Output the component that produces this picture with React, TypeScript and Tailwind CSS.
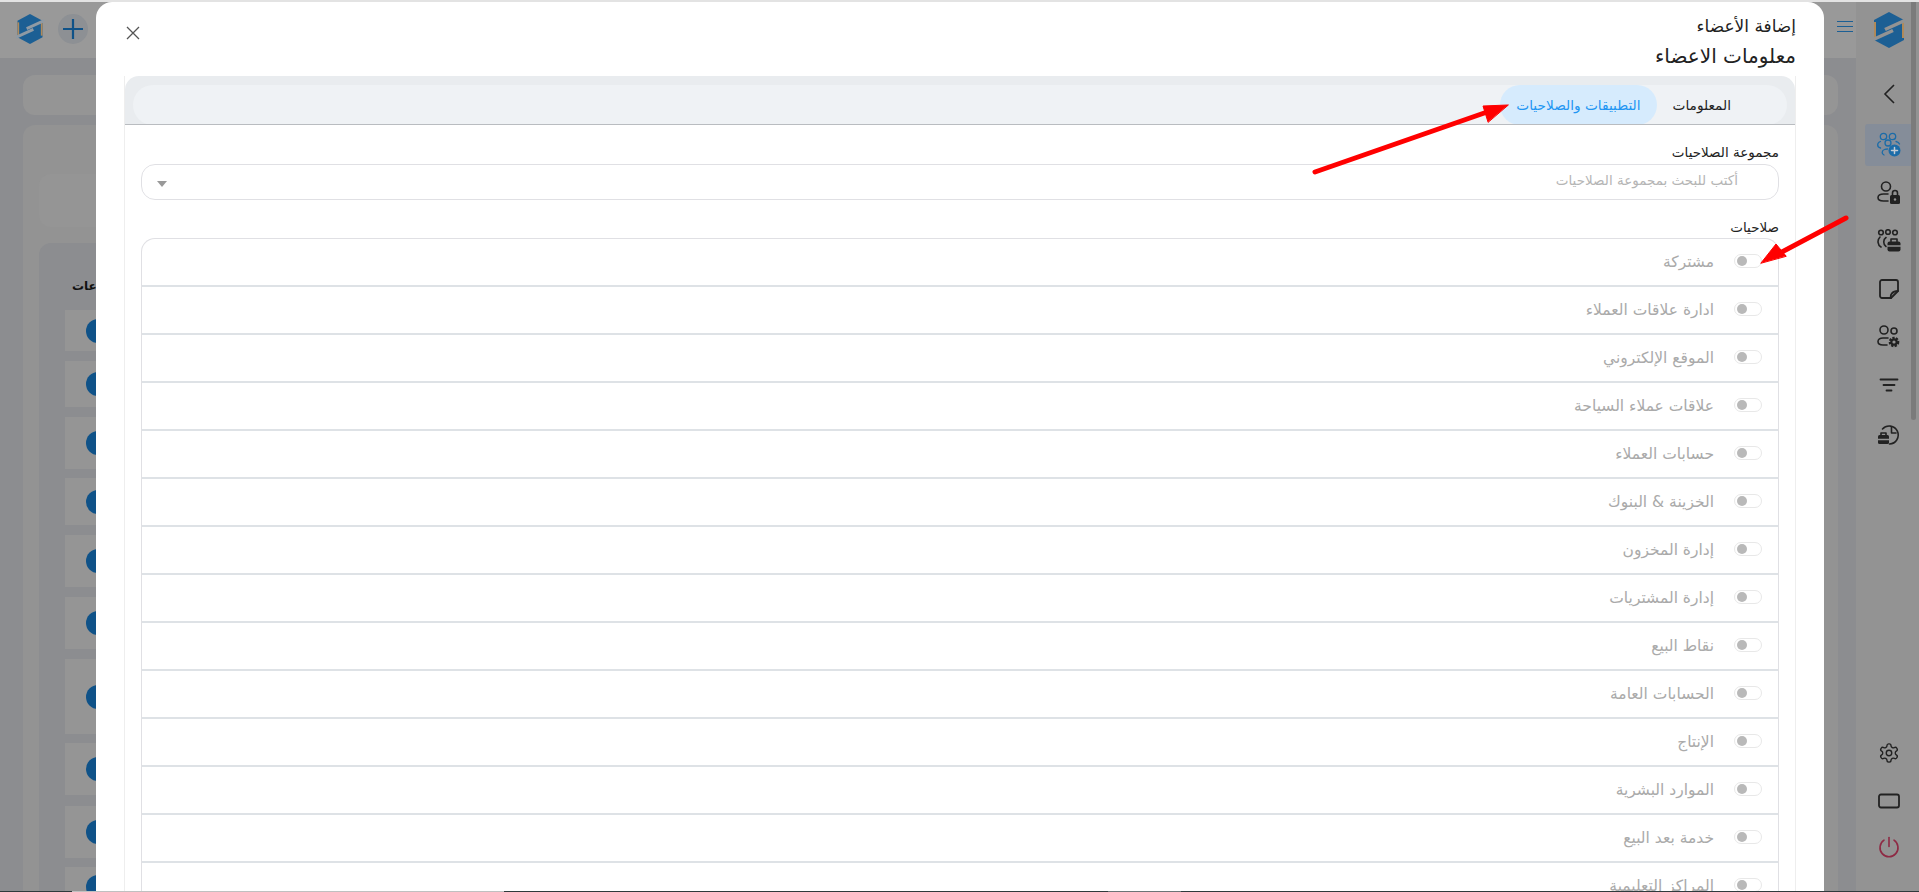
import React from "react";

const perms = [
  "مشتركة",
  "ادارة علاقات العملاء",
  "الموقع الإلكتروني",
  "علاقات عملاء السياحة",
  "حسابات العملاء",
  "الخزينة & البنوك",
  "إدارة المخزون",
  "إدارة المشتريات",
  "نقاط البيع",
  "الحسابات العامة",
  "الإنتاج",
  "الموارد البشرية",
  "خدمة بعد البيع",
  "المراكز التعليمية",
];

const bgRows = [
  [310, 41], [361, 46], [417, 52], [478, 47], [535, 52], [597, 52], [659, 75], [743, 52], [806, 52], [867, 40],
];

function Logo({ width = 32, height = 36, cut = "#939393" }: { width?: number; height?: number; cut?: string }) {
  return (
    <svg width={width} height={height} viewBox="0 0 32 36">
      <path d="M16 0 31 8v20l-15 8-15-8V8z" fill="#1c5f94" />
      <path d="M2 10v16" stroke="#b08a5a" strokeWidth="2" />
      <path d="M30 10v16" stroke="#b08a5a" strokeWidth="2" />
      <path d="M33 8 12 17.500" stroke={cut} strokeWidth="3.500" fill="none" />
      <path d="M-1 28 20 18.500" stroke={cut} strokeWidth="3.500" fill="none" />
    </svg>
  );
}

function SideIcon({ name }: { name: string }) {
  const c = "#222";
  const p = { fill: "none", stroke: c, strokeWidth: 1.6, strokeLinecap: "round" as const, strokeLinejoin: "round" as const };
  if (name === "usersPlus")
    return (
      <svg width="26" height="26" viewBox="0 0 26 26" {...p} stroke="#1c6ca8" strokeWidth="1.300">
        <circle cx="7.500" cy="4.500" r="3.200" />
        <circle cx="16.500" cy="4.500" r="3.200" />
        <circle cx="12" cy="11" r="3" />
        <path d="M4.500 9.500C1 10.500.5 15 4.500 16M8 23c-2.500-1-2.500-4.500.5-5.500 1-.4 2-.5 3-.5" />
        <path d="M20 9.500c1.500.4 3 1.200 3.500 2.500" />
        <circle cx="18.500" cy="18.500" r="6" fill="#1c6ca8" stroke="none" />
        <path d="M18.500 15.500v6M15.500 18.500h6" stroke="#c5ccd4" strokeWidth="1.500" />
      </svg>
    );
  if (name === "userLock")
    return (
      <svg width="24" height="24" viewBox="0 0 24 24" {...p}>
        <circle cx="9" cy="5.500" r="4.500" />
        <path d="M11 13H6.500C3 13 1 14.500 1 16.500S3 20 6.500 20H11" />
        <rect x="13" y="14" width="10" height="9" rx="1.500" fill={c} stroke="none" />
        <path d="M15.500 14v-2a2.500 2.500 0 0 1 5 0v2" />
        <circle cx="18" cy="18.500" r="1.200" fill="#939393" stroke="none" />
      </svg>
    );
  if (name === "team")
    return (
      <svg width="24" height="24" viewBox="0 0 24 24" {...p}>
        <circle cx="4" cy="3.500" r="2.300" />
        <circle cx="11" cy="3" r="2.300" />
        <circle cx="18" cy="3.500" r="2.300" />
        <path d="M3 8C0 11 .5 16 4 18M9 8.500c-3 2-3 7 0 9" />
        <rect x="10.500" y="12.500" width="13" height="10" rx="2" fill={c} stroke="none" />
        <path d="M14 12.500v-2.500h6v2.500" />
        <path d="M10.500 17h13" stroke="#939393" />
      </svg>
    );
  if (name === "note")
    return (
      <svg width="20" height="20" viewBox="0 0 20 20" {...p} strokeWidth="1.800">
        <path d="M12 19H3a2 2 0 0 1-2-2V3a2 2 0 0 1 2-2h14a2 2 0 0 1 2 2v9z" />
        <path d="M12 19c-1-3 1-7 7-7" />
      </svg>
    );
  if (name === "userGear")
    return (
      <svg width="24" height="24" viewBox="0 0 24 24" {...p}>
        <circle cx="7" cy="5" r="4" />
        <circle cx="17" cy="6" r="3" />
        <path d="M11 13H6C3 13 1 14.500 1 16.500S3 20 6 20h4" />
        <circle cx="17" cy="17" r="3.800" fill={c} stroke={c} strokeDasharray="2 1.200" strokeWidth="3" strokeLinecap="butt" />
        <circle cx="17" cy="17" r="1.600" fill="#939393" stroke="none" />
      </svg>
    );
  if (name === "filter")
    return (
      <svg width="20" height="14" viewBox="0 0 20 14" {...p} strokeWidth="1.800">
        <path d="M1.500 1.500h17M4.500 7h11M7.500 12.500h5" />
      </svg>
    );
  if (name === "caseClock")
    return (
      <svg width="24" height="24" viewBox="0 0 24 24" {...p}>
        <path d="M5.500 8a9 9 0 1 1 7 15" />
        <path d="M14.500 6v6h4.500" />
        <rect x="1" y="14" width="11" height="9" rx="1.500" fill={c} stroke="none" />
        <path d="M4 14v-2h5v2" />
        <path d="M1 18.500h11" stroke="#939393" />
      </svg>
    );
  if (name === "gear")
    return (
      <svg width="22" height="22" viewBox="0 0 24 24" {...p} strokeWidth="1.500">
        <path d="M12.220 2h-.44a2 2 0 0 0-2 2v.18a2 2 0 0 1-1 1.730l-.43.250a2 2 0 0 1-2 0l-.15-.080a2 2 0 0 0-2.730.730l-.220.380a2 2 0 0 0 .730 2.730l.150.100a2 2 0 0 1 1 1.720v.510a2 2 0 0 1-1 1.740l-.150.090a2 2 0 0 0-.730 2.730l.220.380a2 2 0 0 0 2.730.730l.150-.080a2 2 0 0 1 2 0l.430.250a2 2 0 0 1 1 1.730V20a2 2 0 0 0 2 2h.440a2 2 0 0 0 2-2v-.18a2 2 0 0 1 1-1.730l.430-.250a2 2 0 0 1 2 0l.150.080a2 2 0 0 0 2.730-.730l.220-.390a2 2 0 0 0-.730-2.730l-.150-.080a2 2 0 0 1-1-1.740v-.500a2 2 0 0 1 1-1.740l.150-.090a2 2 0 0 0 .730-2.730l-.220-.380a2 2 0 0 0-2.730-.730l-.150.080a2 2 0 0 1-2 0l-.430-.250a2 2 0 0 1-1-1.730V4a2 2 0 0 0-2-2z" />
        <circle cx="12" cy="12" r="3" />
      </svg>
    );
  if (name === "rect")
    return (
      <svg width="22" height="16" viewBox="0 0 22 16" {...p} strokeWidth="1.800">
        <rect x="1" y="1.500" width="20" height="13" rx="2" />
      </svg>
    );
  return (
    <svg width="22" height="22" viewBox="0 0 22 22" {...p} stroke="#8e2a44" strokeWidth="1.600">
      <path d="M11 1.500v9" />
      <path d="M6 4.200a9 9 0 1 0 10 0" />
    </svg>
  );
}

function Toggle() {
  return (
    <span dir="ltr" className="-mt-[2px] flex h-[14px] w-[28px] shrink-0 items-center rounded-full border border-[#e8e8e8] bg-white px-[2px]">
      <span className="size-[10px] rounded-full bg-[#b9b9b9]" />
    </span>
  );
}

export default function App() {
  return (
    <div className="relative flex h-[892px] w-full overflow-hidden bg-[#8c8d90] font-['DejaVu_Sans',sans-serif]">
      {/* dimmed page */}
      <div className="flex min-h-0 min-w-0 flex-1 flex-col">
        <header className="flex h-[58px] shrink-0 items-center justify-between bg-[#999999] pl-[16px] pr-[3px]">
          <div className="flex items-center gap-[14px]">
            <Logo width={28} height={30} cut="#8f9aa4" />
            <span className="flex size-[30px] items-center justify-center rounded-full bg-[#8d9094] text-[#0f5288]">
              <svg width="20" height="20" viewBox="0 0 20 20" fill="none" stroke="currentColor" strokeWidth="2.200">
                <path d="M10 0v20M0 10h20" />
              </svg>
            </span>
          </div>
          <span className="mt-[-5px] flex w-[16px] flex-col gap-[4px]">
            <span className="h-[1px] bg-[#1c5f94]" />
            <span className="h-[1px] bg-[#1c5f94]" />
            <span className="h-[1px] bg-[#1c5f94]" />
          </span>
        </header>
        <main className="flex min-h-0 flex-1 flex-col gap-[10px] overflow-hidden pl-[23px] pr-[18px] pt-[17px]">
          <div className="h-[40px] shrink-0 rounded-[12px] bg-[#959595]" />
          <div className="flex-1 rounded-t-[12px] bg-[#939393] px-[16px] pt-[49px]">
            <div className="h-[53px] rounded-[12px] bg-[#959595]" />
            <div className="mt-[16px] h-[700px] rounded-t-[12px] bg-[#8c8d90]">
              {bgRows.map(([top, h], i) => (
                <div
                  key={i}
                  className="absolute left-[65px] flex w-[60px] items-center bg-[#959595] pl-[21px]"
                  style={{ top, height: h }}
                >
                  <span className="size-[24px] shrink-0 rounded-full bg-[#0f5288]" />
                </div>
              ))}
              <span className="absolute left-[72px] top-[278px] text-[12px] font-bold leading-[16px] text-[#111]">اعات</span>
            </div>
          </div>
        </main>
      </div>
      <aside className="flex w-[63px] shrink-0 flex-col items-center bg-[#939393] pb-[34px] pl-[3px] pt-[12px]">
        <Logo />
        <svg className="mt-[36px]" width="12" height="20" viewBox="0 0 12 20" fill="none" stroke="#222" strokeWidth="1.600">
          <path d="M11 1 2 10l9 9" />
        </svg>
        <nav className="mt-[17px] flex flex-col items-center">
          {["usersPlus", "userLock", "team", "note", "userGear", "filter", "caseClock"].map((n, i) => (
            <div key={n} className="flex h-[48px] items-center justify-center">
              <div className={`flex h-[42px] w-[48px] items-center justify-center rounded-[3px] ${i === 0 ? "bg-[#858d99]" : ""}`}>
                <SideIcon name={n} />
              </div>
            </div>
          ))}
        </nav>
        <div className="mt-auto flex flex-col items-center gap-[27px]">
          <div className="mb-[2px] flex">
            <SideIcon name="gear" />
          </div>
          <SideIcon name="rect" />
          <SideIcon name="power" />
        </div>
      </aside>
      <div className="absolute right-[3px] top-0 h-[420px] w-[5px] rounded-full bg-[#7b7b7b]" />
      <div className="absolute inset-x-0 top-0 h-[2px] bg-[#e3e3e3]" />

      {/* modal */}
      <div dir="rtl" className="absolute bottom-0 left-[96px] right-[95px] top-[2px] overflow-hidden rounded-t-[16px] bg-white px-[28px] pt-[12px] text-[#222]">
        <button className="absolute left-[30px] top-[24px] text-[#555]">
          <svg width="14" height="14" viewBox="0 0 14 14" fill="none" stroke="currentColor" strokeWidth="1.300">
            <path d="M1 1l12 12M13 1 1 13" />
          </svg>
        </button>
        <h2 className="text-[17px] leading-[24px]">إضافة الأعضاء</h2>
        <h3 className="mt-[5px] text-[20px] leading-[26px]">معلومات الاعضاء</h3>
        <section className="mt-[7px] border-x border-[#eeeeee]">
          <div className="overflow-hidden rounded-t-[14px] border-b border-[#b9bcc0] bg-[#e9ecef] px-[8px] pt-[9px]">
            <div className="-mb-[1px] flex h-[40px] items-center rounded-[20px] bg-[#eff2f5] pr-[56px] text-[13.700px]">
              <span className="ml-[16px] leading-[18px] text-[#222]">المعلومات</span>
              <span className="flex h-[40px] items-center rounded-[20px] bg-[#d6ebfd] px-[16px] text-[#2196f3]">التطبيقات والصلاحيات</span>
            </div>
          </div>
          <div className="px-[16px] pt-[18px]">
            <label className="block text-[13.500px] leading-[18px]">مجموعة الصلاحيات</label>
            <div className="mt-[3px] flex h-[36px] items-center justify-between rounded-[14px] border border-[#e0e0e4] pl-[15px] pr-[40px]">
              <span className="-mt-[4px] text-[13.500px] leading-[18px] text-[#b5b5b5]">أكتب للبحث بمجموعة الصلاحيات</span>
              <span className="mt-[4px] h-0 w-0 border-x-[5px] border-t-[6px] border-x-transparent border-t-[#999]" />
            </div>
            <label className="mt-[17px] block text-[13.500px] leading-[20px]">صلاحيات</label>
            <ul className="mt-[1px] rounded-t-[14px] border-x border-t border-[#e0e0e4]">
              {perms.map((p) => (
                <li key={p} className="flex h-[48px] items-center gap-[20px] border-b-2 border-[#dee2e6] pr-[16px]">
                  <Toggle />
                  <span className="text-[15.500px] leading-[20px] text-[#aaaaaa]">{p}</span>
                </li>
              ))}
            </ul>
          </div>
        </section>
      </div>

      <div className="absolute inset-x-0 bottom-0 flex h-[1px] bg-[#2f3a3c]">
        <span className="ml-[72px] w-[432px] bg-[#c0c0c0]" />
        <span className="ml-[604px] w-[73px] bg-[#6b7476]" />
      </div>

      {/* annotation arrows */}
      <svg className="pointer-events-none absolute left-0 top-0" width="1919" height="892" fill="#ff0000" stroke="#ff0000" strokeLinecap="round">
        <path d="M1315 172 1490 111" strokeWidth="5" fill="none" />
        <path d="M1508 105 1483 106 1488 122z" strokeWidth="1" />
        <path d="M1846 218 1778 254" strokeWidth="5" fill="none" />
        <path d="M1761 263 1776 244 1786 256z" strokeWidth="1" />
      </svg>
    </div>
  );
}
